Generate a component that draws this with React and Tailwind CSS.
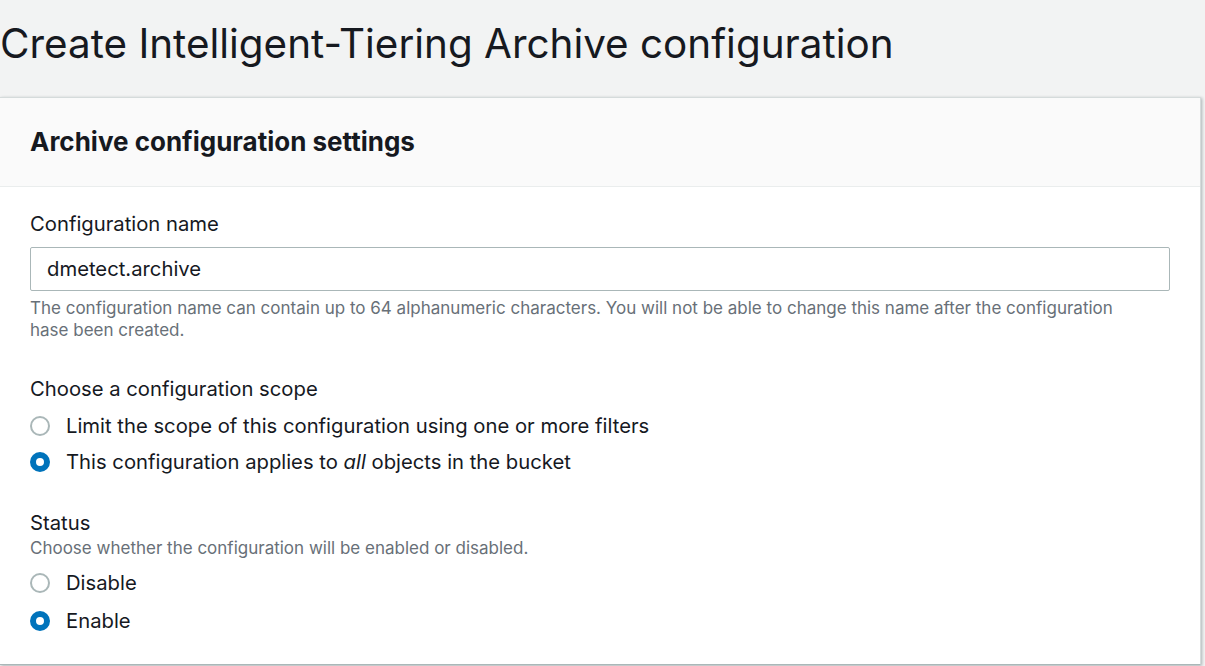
import React from "react";

function Radio({ checked }) {
  return checked ? (
    <span className="w-[20px] h-[20px] rounded-full border-[6px] border-[#0073bb] bg-white shrink-0" />
  ) : (
    <span className="w-[20px] h-[20px] rounded-full border-2 border-[#aab7b8] bg-white shrink-0" />
  );
}

function Option({ checked, tall, children }) {
  return (
    <label className={tall ? "flex items-center gap-[16px] h-[38px]" : "flex items-center gap-[16px] h-[36px]"}>
      <Radio checked={checked} />
      <span className="text-[20.25px] leading-[28px] text-[#16191f]">{children}</span>
    </label>
  );
}

export default function App() {
  return (
    <div className="w-[1205px] h-[666px] bg-[#f2f3f3] overflow-hidden font-['Inter','Noto_Sans',sans-serif]">
      <div className="h-[97px] pt-[20px]">
        <h1 className="text-[40.4px] leading-[48px] font-normal text-[#16191f] whitespace-nowrap">
          Create Intelligent-Tiering Archive configuration
        </h1>
      </div>
      <div className="w-[1201px] h-[568px] bg-white border-t border-r border-b border-[#d5dbdb] border-b-[#aab7b8] shadow-[1px_1px_3px_rgba(0,28,36,0.3)] flex flex-col">
        <div className="h-[89px] shrink-0 bg-[#fafafa] border-b border-[#eaeded] flex items-center px-[30px]">
          <h2 className="text-[26px] leading-[32px] font-bold text-[#16191f]">Archive configuration settings</h2>
        </div>
        <div className="px-[30px] pt-[23px]">
          <div className="text-[20.25px] leading-[28px] text-[#16191f]">Configuration name</div>
          <div className="mt-[9px] w-[1140px] h-[44px] border border-[#aab7b8] rounded-[2px] flex items-center px-[16px] text-[20.25px] leading-[28px] text-[#16191f]">
            dmetect.archive
          </div>
          <p className="mt-[6px] text-[17px] leading-[22px] text-[#687078] w-[1120px]">
            The configuration name can contain up to 64 alphanumeric characters. You will not be able to change this name after the configuration hase been created.
          </p>
          <div className="mt-[34px] text-[20.25px] leading-[28px] text-[#16191f]">Choose a configuration scope</div>
          <div className="mt-[5px] flex flex-col">
            <Option>Limit the scope of this configuration using one or more filters</Option>
            <Option checked>
              This configuration applies to <i>all</i> objects in the bucket
            </Option>
          </div>
          <div className="mt-[29px] text-[20.25px] leading-[28px] text-[#16191f]">Status</div>
          <div className="text-[17px] leading-[22px] text-[#687078]">
            Choose whether the configuration will be enabled or disabled.
          </div>
          <div className="mt-[5px] flex flex-col">
            <Option tall>Disable</Option>
            <Option tall checked>Enable</Option>
          </div>
        </div>
      </div>
    </div>
  );
}
